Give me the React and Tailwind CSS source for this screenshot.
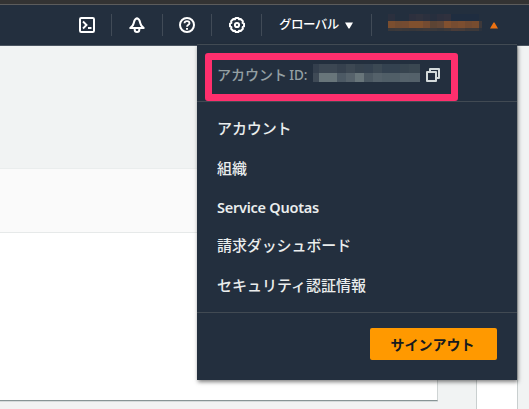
const jp = "font-['Noto_Sans_CJK_JP',sans-serif]";

const nameRows = [
  ["h-[7px]", ["bg-[#2b303e]", "bg-[#232f3e]", "bg-[#232f3e]", "bg-[#2d303e]", "bg-[#30323e]", "bg-[#2b303e]", "bg-[#272f3e]", "bg-[#2d303e]", "bg-[#30313e]", "bg-[#1f2d40]", "bg-[#1f2d40]", "bg-[#1f2d40]", "bg-[#1f2d40]", "bg-[#232f3e]"]],
  ["h-[7px]", ["bg-[#7b4e2f]", "bg-[#724b31]", "bg-[#744b31]", "bg-[#80502e]", "bg-[#80502e]", "bg-[#744b31]", "bg-[#5c4434]", "bg-[#614636]", "bg-[#81502f]", "bg-[#764c31]", "bg-[#7c4e30]", "bg-[#724a31]", "bg-[#774c2f]", "bg-[#3e393a]"]],
  ["h-[3px]", ["bg-[#3a383a]", "bg-[#3d393a]", "bg-[#3a383a]", "bg-[#37373b]", "bg-[#3a383a]", "bg-[#3d393a]", "bg-[#3b393b]", "bg-[#37373b]", "bg-[#3d393a]", "bg-[#4a3c39]", "bg-[#473c39]", "bg-[#3d393a]", "bg-[#3d393a]", "bg-[#2b323d]"]],
];

const idRows = [
  ["bg-[#343f4d]", "bg-[#3c4753]", "bg-[#3c4753]", "bg-[#36414e]", "bg-[#3d4853]", "bg-[#36424e]", "bg-[#354250]", "bg-[#3c4954]", "bg-[#344250]", "bg-[#344250]", "bg-[#37444f]", "bg-[#3a4751]"],
  ["bg-[#3f4a56]", "bg-[#68757a]", "bg-[#68757a]", "bg-[#4c5964]", "bg-[#56626b]", "bg-[#68757a]", "bg-[#4b5862]", "bg-[#54616a]", "bg-[#505e67]", "bg-[#505e67]", "bg-[#55626b]", "bg-[#54616a]"],
];

function Console() {
  return (
    <svg viewBox="0 0 16 16" className="size-4" fill="none" stroke="#fff" strokeWidth="2">
      <rect x="1" y="1" width="14" height="14" rx="1.3" />
      <path d="M4 4.500 7.500 8 4 11.500" strokeWidth="1.9" />
      <path d="M9 11h3.500" strokeWidth="2" />
    </svg>
  );
}

function Bell() {
  return (
    <svg viewBox="0 0 16 16" className="size-4" fill="none" stroke="#fff" strokeWidth="2" strokeLinejoin="round">
      <path d="M8 1.200C6.300 1.700 5.100 3.600 4.800 6 4.500 8 3 9.600 1.300 11h13.400C13 9.600 11.500 8 11.200 6 10.900 3.600 9.700 1.700 8 1.200Z" />
      <path d="M5.700 11.500v1.200c0 3 4.600 3 4.600 0v-1.200" />
    </svg>
  );
}

function Help() {
  return (
    <svg viewBox="0 0 16 16" className="size-4" fill="none" stroke="#fff" strokeWidth="2">
      <circle cx="8" cy="8" r="7" />
      <path d="M5.500 6.200C5.500 3.500 10.500 3.500 10.500 6.200 10.500 7.800 8 7.600 8 9.700" strokeWidth="1.8" />
      <path d="M8 10.900v1.800" />
    </svg>
  );
}

function Gear() {
  return (
    <svg viewBox="0 0 16 16" className="size-4" fill="none" stroke="#fff" strokeWidth="2" strokeLinejoin="round">
      <path d="M6.600 1h2.800l.6 1.300 1.700-.3 2.200 2.200-.3 1.700 1.400.7v2.800l-1.400.7.3 1.700-2.200 2.200-1.700-.3-.6 1.300H6.600L6 13.700l-1.700.3-2.200-2.200.3-1.700L1 9.400V6.600l1.400-.7-.3-1.700L4.300 2l1.700.3Z" />
      <circle cx="8" cy="8" r="2.1" />
    </svg>
  );
}

function Copy() {
  return (
    <svg viewBox="0 0 14 14" className="size-3.5" fill="none" stroke="#d5dbdb" strokeWidth="2" strokeLinejoin="round">
      <path d="M4 3.500V1h9v9h-2.500" />
      <path d="M1 4h9v9H1Z" />
    </svg>
  );
}

function Divider() {
  return <div className="h-[22px] w-px shrink-0 bg-[#414b57]" />;
}

function Nav() {
  return (
    <header className={`flex h-[46px] flex-col ${jp}`}>
      <div className="h-[5px] border-b border-[#5c5c5c] bg-[#333]" />
      <div className="flex h-[41px] items-center border-b border-[#4b5561] bg-[#232f3e] pl-[79px]">
        <Console />
        <div className="w-4" /><Divider /><div className="w-[17px]" />
        <Bell />
        <div className="w-[17px]" /><Divider /><div className="w-4" />
        <Help />
        <div className="w-4" /><Divider /><div className="w-[17px]" />
        <Gear />
        <div className="w-4" /><Divider />
        <span className="-mt-0.5 ml-[17px] w-[66px] whitespace-nowrap text-[12.5px] leading-5 font-medium tracking-[-0.55px] text-white">グローバル</span>
        <svg viewBox="0 0 8 7" className="h-[7px] w-2" fill="#fff"><path d="M0 .5h8L4.500 6.500h-1Z" /></svg>
        <div className="w-[18px]" /><Divider />
        <div className="-mt-[5px] ml-4 flex w-[98px] flex-col">
          {nameRows.map(([height, cells], r) => (
            <div key={r} className={`flex ${height}`}>
              {cells.map((c, i) => <div key={i} className={`${i === 13 ? "w-[3px]" : "w-[7px]"} ${c}`} />)}
            </div>
          ))}
        </div>
        <svg viewBox="0 0 8 7" className="ml-[4px] h-[7px] w-2" fill="#ec7211"><path d="M0 6.500h8L4.500.5h-1Z" /></svg>
      </div>
    </header>
  );
}

function Page() {
  return (
    <main className="flex flex-1 justify-between bg-[#f1f3f3]">
      <div className="w-[438px] pt-[122px]">
        <section className="h-[233px] border-r border-b border-r-[#cfd4d4] border-b-[#879596] bg-white shadow-[0_1px_0_#d5dbdb]">
          <div className="h-[65px] border-y border-t-[#eaeded] border-b-[#e6e9e9] bg-[#fafafa]" />
        </section>
      </div>
      <div className="mr-[11px] w-[42px] border-x border-[#c9cfcf] bg-white" />
    </main>
  );
}

function AccountMenu() {
  return (
    <aside className={`absolute top-[44px] left-[197px] flex h-[336px] w-80 flex-col border-t border-[#414a53] bg-[#232f3e] text-[#eaeded] shadow-[1px_2px_4px_rgba(0,0,0,0.5)] ${jp}`}>
      <div className="flex h-[57px] items-start border-b border-[#414a53] pl-5">
        <div className="mt-[17px] w-24 whitespace-nowrap text-[14px] leading-6 font-medium text-[#95a0a4]">アカウント <span className="-ml-px font-['Noto_Sans',sans-serif] text-[13.5px]">ID:</span></div>
        <div className="mt-[19px]">
          {idRows.map((cells, r) => (
            <div key={r} className="flex h-[9px]">
              {cells.map((c, i) => <div key={i} className={`${i === 0 ? "w-[6px]" : i === 11 ? "w-[11px]" : "w-[9px]"} ${c}`} />)}
            </div>
          ))}
        </div>
        <div className="mt-[23px] ml-[6px]"><Copy /></div>
      </div>
      <nav className="flex h-[211px] flex-col border-b border-[#414a53] pt-[7px] pl-5 text-[15px] leading-[39px] font-medium">
        <a className="-mt-px mb-px tracking-[-0.1px]">アカウント</a>
        <a>組織</a>
        <a className="mt-px -mb-px font-['Noto_Sans',sans-serif] text-[14.5px] tracking-[-0.25px] font-semibold">Service Quotas</a>
        <a className="-mt-px mb-px tracking-[-0.1px]">請求ダッシュボード</a>
        <a>セキュリティ認証情報</a>
      </nav>
      <div className="flex justify-end pt-[15px] pr-5">
        <button className="h-8 w-[127px] rounded-[2px] bg-[#f90] pr-0.5 text-[14px] leading-[31px] font-bold text-[#16191f]">サインアウト</button>
      </div>
      <div className="absolute top-2 left-[8px] h-12 w-[253px] rounded-[3px] border-[7px] border-[#ff2f6d]" />
    </aside>
  );
}

export default function App() {
  return (
    <div className="relative flex h-[409px] w-[529px] flex-col overflow-hidden">
      <Nav />
      <Page />
      <AccountMenu />
    </div>
  );
}
